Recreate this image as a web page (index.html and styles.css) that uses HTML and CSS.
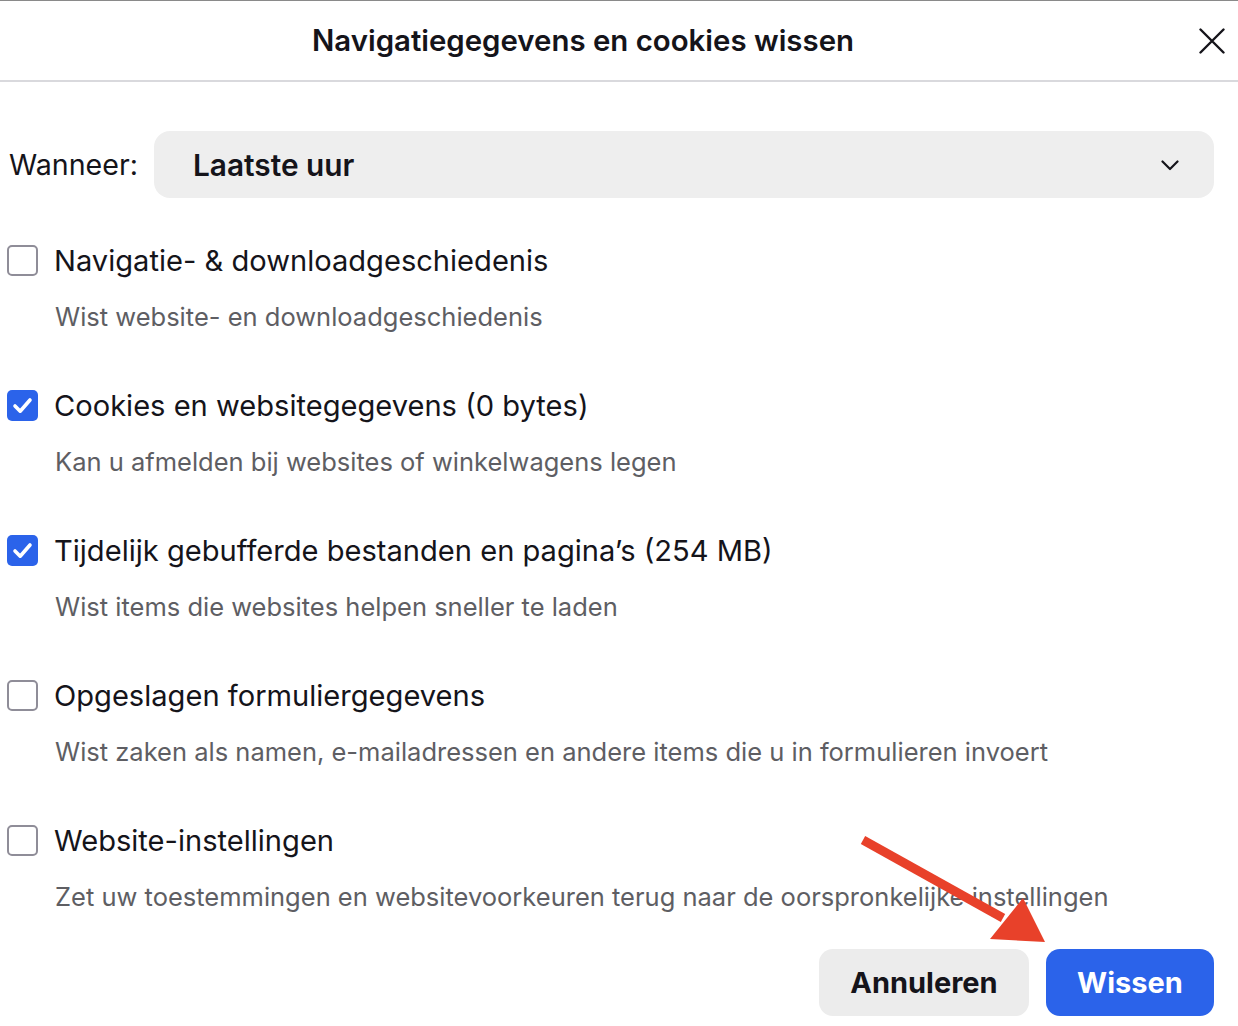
FILE: index.html
```html
<!DOCTYPE html>
<html lang="nl">
<head>
<meta charset="utf-8">
<title>Navigatiegegevens en cookies wissen</title>
<link rel="stylesheet" href="styles.css">
</head>
<body>
<div class="dialog">
  <header class="header">
    <h1 class="title">Navigatiegegevens en cookies wissen</h1>
    <button class="close" aria-label="Sluiten">
      <svg width="26" height="26" viewBox="0 0 26 26"><path d="M1.5 1.5 L24.5 24.5 M24.5 1.5 L1.5 24.5" stroke="#15141a" stroke-width="2.4" stroke-linecap="round" fill="none"/></svg>
    </button>
  </header>
  <main class="content">
    <div class="when">
      <span class="when-label">Wanneer:</span>
      <div class="select">
        <span class="select-value">Laatste uur</span>
        <svg class="chevron" width="18" height="11" viewBox="0 0 18 11"><path d="M1.5 1.5 L9 9 L16.5 1.5" stroke="#15141a" stroke-width="2.2" fill="none" stroke-linecap="round" stroke-linejoin="round"/></svg>
      </div>
    </div>
    <ul class="options">
      <li class="option">
        <div class="option-row"><span class="box"></span><span class="option-label">Navigatie- &amp; downloadgeschiedenis</span></div>
        <p class="option-desc">Wist website- en downloadgeschiedenis</p>
      </li>
      <li class="option">
        <div class="option-row"><span class="box checked"><svg width="31" height="31" viewBox="0 0 31 31"><path d="M8 16 L13.2 21.2 L23 10" stroke="#fff" stroke-width="3.6" fill="none" stroke-linecap="round" stroke-linejoin="round"/></svg></span><span class="option-label">Cookies en websitegegevens (0 bytes)</span></div>
        <p class="option-desc">Kan u afmelden bij websites of winkelwagens legen</p>
      </li>
      <li class="option">
        <div class="option-row"><span class="box checked"><svg width="31" height="31" viewBox="0 0 31 31"><path d="M8 16 L13.2 21.2 L23 10" stroke="#fff" stroke-width="3.6" fill="none" stroke-linecap="round" stroke-linejoin="round"/></svg></span><span class="option-label">Tijdelijk gebufferde bestanden en pagina’s (254 MB)</span></div>
        <p class="option-desc">Wist items die websites helpen sneller te laden</p>
      </li>
      <li class="option">
        <div class="option-row"><span class="box"></span><span class="option-label">Opgeslagen formuliergegevens</span></div>
        <p class="option-desc">Wist zaken als namen, e-mailadressen en andere items die u in formulieren invoert</p>
      </li>
      <li class="option">
        <div class="option-row"><span class="box"></span><span class="option-label">Website-instellingen</span></div>
        <p class="option-desc">Zet uw toestemmingen en websitevoorkeuren terug naar de oorspronkelijke instellingen</p>
      </li>
    </ul>
    <div class="actions">
      <button class="btn btn-cancel">Annuleren</button>
      <button class="btn btn-primary">Wissen</button>
    </div>
  </main>
  <svg class="arrow" width="1238" height="1026" viewBox="0 0 1238 1026">
    <line x1="863" y1="840" x2="1003" y2="918" stroke="#e8412a" stroke-width="9" stroke-linecap="butt"/>
    <polygon points="990,939 1023,898 1045,942" fill="#e8412a"/>
  </svg>
</div>
</body>
</html>
```

FILE: styles.css
```css
* { box-sizing: border-box; }
html, body { margin: 0; padding: 0; background: #fff; }
body {
  font-family: Inter, "Noto Sans", "Liberation Sans", sans-serif;
  color: #15141a;
  width: 1238px;
  height: 1026px;
  overflow: hidden;
}
.dialog {
  position: relative;
  height: 1026px;
  border-top: 1px solid #8a8a8a;
}
.header {
  display: flex;
  align-items: center;
  height: 81px;
  border-bottom: 2px solid #d9d9dd;
}
.title {
  flex: 1;
  margin: 0;
  text-align: center;
  font-size: 29.4px;
  font-weight: 600;
}
.close {
  width: 72px;
  height: 60px;
  display: flex;
  align-items: center;
  justify-content: flex-end;
  padding: 0 13px 0 0;
  border: 0;
  background: none;
}
.content {
  padding: 49px 24px 0 7px;
}
.when {
  display: flex;
  align-items: center;
  gap: 16px;
}
.when-label {
  font-size: 28.6px;
  padding-left: 2px;
  width: 131px;
  flex: none;
}
.select {
  flex: 1;
  height: 67px;
  background: #eeeeee;
  border-radius: 16px;
  display: flex;
  align-items: center;
  justify-content: space-between;
  padding: 0 35px 0 39px;
}
.select-value {
  font-size: 29.8px;
  font-weight: 600;
}
.chevron { margin-top: 2px; }
.options {
  list-style: none;
  margin: 46px 0 0 0;
  padding: 0;
  display: flex;
  flex-direction: column;
  gap: 56px;
}
.option-row {
  display: flex;
  align-items: center;
  gap: 16px;
  height: 32px;
}
.box {
  width: 31px;
  height: 31px;
  border: 2px solid #8f8d98;
  border-radius: 5px;
  flex: none;
  display: flex;
  align-items: center;
  justify-content: center;
}
.box.checked {
  background: #2b63ea;
  border: 0;
}
.option-label {
  font-size: 29.1px;
}
.option-desc {
  margin: 25px 0 0 48px;
  line-height: 32px;
  font-size: 25.5px;
  color: #5e5e63;
}
.actions {
  display: flex;
  justify-content: flex-end;
  gap: 17px;
  margin-top: 36px;
}
.btn {
  height: 67px;
  border: 0;
  border-radius: 14px;
  font-family: inherit;
  font-size: 29px;
  font-weight: 700;
}
.btn-cancel {
  width: 210px;
  background: #ececec;
  color: #15141a;
}
.btn-primary {
  width: 168px;
  background: #2b63ea;
  color: #fff;
}
.arrow {
  position: absolute;
  left: 0;
  top: -1px;
  pointer-events: none;
}
```
